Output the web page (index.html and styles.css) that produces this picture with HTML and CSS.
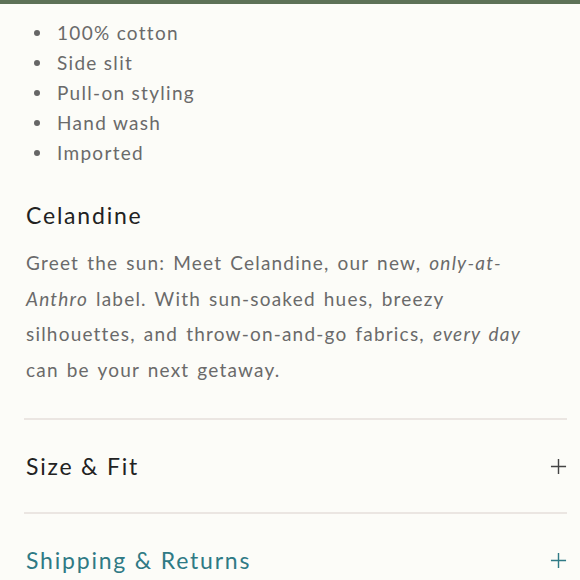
FILE: index.html
```html
<!DOCTYPE html>
<html lang="en">
<head>
  <meta charset="UTF-8" />
  <title>Celandine Details</title>
  <meta name="viewport" content="width=device-width, initial-scale=1" />
  <link rel="stylesheet" href="styles.css">
</head>
<body>
  <div class="topbar"></div>

  <div class="details">
    <ul class="features">
      <li>100% cotton</li>
      <li>Side slit</li>
      <li>Pull-on styling</li>
      <li>Hand wash</li>
      <li>Imported</li>
    </ul>

    <h3 class="brand">Celandine</h3>
    <p class="brand-copy">Greet the sun: Meet Celandine, our new, <em>only-at-Anthro</em> label. With sun-soaked hues, breezy silhouettes, and throw-on-and-go fabrics, <em>every day</em> can be your next getaway.</p>

    <div class="accordion">
      <div class="acc-row">
        <span>Size &amp; Fit</span>
        <svg class="plus" viewBox="0 0 18 18"><path d="M9 1v16M1 9h16"/></svg>
      </div>
      <div class="acc-row active">
        <span>Shipping &amp; Returns</span>
        <svg class="plus" viewBox="0 0 18 18"><path d="M9 1v16M1 9h16"/></svg>
      </div>
    </div>
  </div>
</body>
</html>
```

FILE: styles.css
```css
body {
  margin: 0;
  background: #fcfcf8;
  font-family: Lato, "Noto Sans", sans-serif;
  color: #6a6a6a;
}
.topbar {
  height: 4px;
  background: #5e7258;
}
.details {
  padding: 0 13px 0 26px;
}
.features {
  list-style: none;
  margin: 14px 0 0;
  padding-left: 8px;
  font-size: 19px;
  line-height: 30px;
  letter-spacing: 1.3px;
}
.features li {
  display: flex;
  align-items: center;
}
.features li::before {
  content: "";
  width: 6px;
  height: 6px;
  border-radius: 50%;
  background: #666;
  margin-right: 17px;
  flex-shrink: 0;
}
.brand {
  margin: 32px 0 0;
  font-size: 23px;
  font-weight: normal;
  color: #222;
  letter-spacing: 1.8px;
  line-height: 30px;
}
.brand-copy {
  margin: 15px 0 0;
  font-size: 19px;
  line-height: 35.5px;
  letter-spacing: 1.2px;
  word-spacing: 2px;
  padding-right: 20px;
}
.accordion {
  margin-top: 31px;
  margin-left: -2px;
}
.acc-row {
  display: flex;
  justify-content: space-between;
  align-items: center;
  box-sizing: border-box;
  height: 94px;
  border-top: 2px solid #ebe6e2;
  font-size: 23px;
  letter-spacing: 1.8px;
  color: #222;
  padding-left: 2px;
}
.plus {
  width: 17px;
  height: 17px;
  fill: none;
  stroke: #444;
  stroke-width: 1.5;
}
.acc-row.active {
  color: #2f7a85;
}
.acc-row.active .plus {
  stroke: #2f7a85;
}
```
